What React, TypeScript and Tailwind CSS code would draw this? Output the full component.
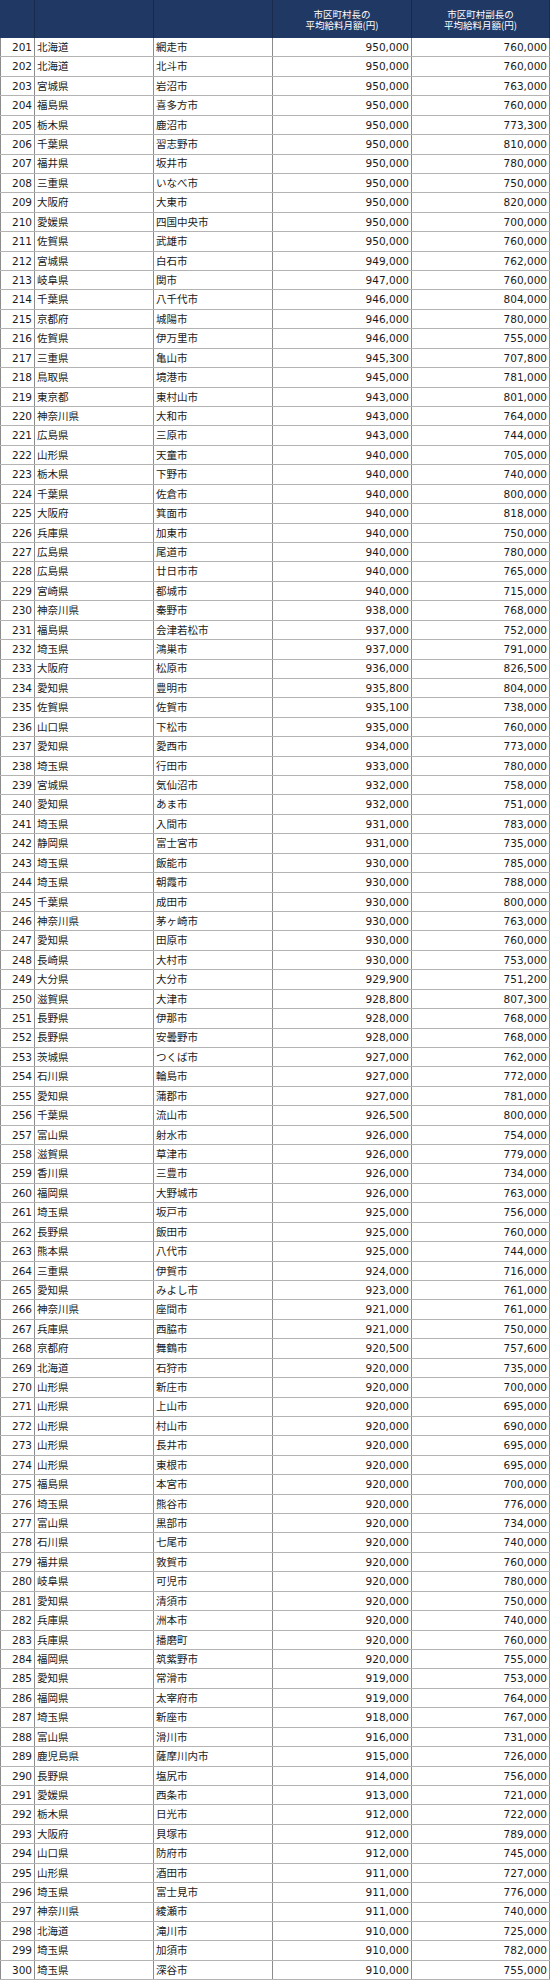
import React from "react";

const raw = `201,北海道,網走市,950000,760000
202,北海道,北斗市,950000,760000
203,宮城県,岩沼市,950000,763000
204,福島県,喜多方市,950000,760000
205,栃木県,鹿沼市,950000,773300
206,千葉県,習志野市,950000,810000
207,福井県,坂井市,950000,780000
208,三重県,いなべ市,950000,750000
209,大阪府,大東市,950000,820000
210,愛媛県,四国中央市,950000,700000
211,佐賀県,武雄市,950000,760000
212,宮城県,白石市,949000,762000
213,岐阜県,関市,947000,760000
214,千葉県,八千代市,946000,804000
215,京都府,城陽市,946000,780000
216,佐賀県,伊万里市,946000,755000
217,三重県,亀山市,945300,707800
218,鳥取県,境港市,945000,781000
219,東京都,東村山市,943000,801000
220,神奈川県,大和市,943000,764000
221,広島県,三原市,943000,744000
222,山形県,天童市,940000,705000
223,栃木県,下野市,940000,740000
224,千葉県,佐倉市,940000,800000
225,大阪府,箕面市,940000,818000
226,兵庫県,加東市,940000,750000
227,広島県,尾道市,940000,780000
228,広島県,廿日市市,940000,765000
229,宮崎県,都城市,940000,715000
230,神奈川県,秦野市,938000,768000
231,福島県,会津若松市,937000,752000
232,埼玉県,鴻巣市,937000,791000
233,大阪府,松原市,936000,826500
234,愛知県,豊明市,935800,804000
235,佐賀県,佐賀市,935100,738000
236,山口県,下松市,935000,760000
237,愛知県,愛西市,934000,773000
238,埼玉県,行田市,933000,780000
239,宮城県,気仙沼市,932000,758000
240,愛知県,あま市,932000,751000
241,埼玉県,入間市,931000,783000
242,静岡県,富士宮市,931000,735000
243,埼玉県,飯能市,930000,785000
244,埼玉県,朝霞市,930000,788000
245,千葉県,成田市,930000,800000
246,神奈川県,茅ヶ崎市,930000,763000
247,愛知県,田原市,930000,760000
248,長崎県,大村市,930000,753000
249,大分県,大分市,929900,751200
250,滋賀県,大津市,928800,807300
251,長野県,伊那市,928000,768000
252,長野県,安曇野市,928000,768000
253,茨城県,つくば市,927000,762000
254,石川県,輪島市,927000,772000
255,愛知県,蒲郡市,927000,781000
256,千葉県,流山市,926500,800000
257,富山県,射水市,926000,754000
258,滋賀県,草津市,926000,779000
259,香川県,三豊市,926000,734000
260,福岡県,大野城市,926000,763000
261,埼玉県,坂戸市,925000,756000
262,長野県,飯田市,925000,760000
263,熊本県,八代市,925000,744000
264,三重県,伊賀市,924000,716000
265,愛知県,みよし市,923000,761000
266,神奈川県,座間市,921000,761000
267,兵庫県,西脇市,921000,750000
268,京都府,舞鶴市,920500,757600
269,北海道,石狩市,920000,735000
270,山形県,新庄市,920000,700000
271,山形県,上山市,920000,695000
272,山形県,村山市,920000,690000
273,山形県,長井市,920000,695000
274,山形県,東根市,920000,695000
275,福島県,本宮市,920000,700000
276,埼玉県,熊谷市,920000,776000
277,富山県,黒部市,920000,734000
278,石川県,七尾市,920000,740000
279,福井県,敦賀市,920000,760000
280,岐阜県,可児市,920000,780000
281,愛知県,清須市,920000,750000
282,兵庫県,洲本市,920000,740000
283,兵庫県,播磨町,920000,760000
284,福岡県,筑紫野市,920000,755000
285,愛知県,常滑市,919000,753000
286,福岡県,太宰府市,919000,764000
287,埼玉県,新座市,918000,767000
288,富山県,滑川市,916000,731000
289,鹿児島県,薩摩川内市,915000,726000
290,長野県,塩尻市,914000,756000
291,愛媛県,西条市,913000,721000
292,栃木県,日光市,912000,722000
293,大阪府,貝塚市,912000,789000
294,山口県,防府市,912000,745000
295,山形県,酒田市,911000,727000
296,埼玉県,富士見市,911000,776000
297,神奈川県,綾瀬市,911000,740000
298,北海道,滝川市,910000,725000
299,埼玉県,加須市,910000,782000
300,埼玉県,深谷市,910000,755000`;

const rows = raw.split("\n").map((line) => {
  const [rank, pref, city, mayor, deputy] = line.split(",");
  return { rank, pref, city, mayor: Number(mayor), deputy: Number(deputy) };
});

const fmt = (n: number) => n.toLocaleString("en-US");

const cols = "grid grid-cols-[35px_119px_119px_139px_138px]";

export default function App() {
  return (
    <div
      className="w-[550px] bg-white text-[#1a1a1a]"
      style={{ fontFamily: '"DejaVu Sans", "Noto Sans CJK JP", sans-serif' }}
    >
      {/* header */}
      <div className={`${cols} h-[38px] bg-[#203864] text-white`}>
        <div className="border-r border-[#1a2a4a]" />
        <div className="border-r border-[#1a2a4a]" />
        <div className="border-r border-[#1a2a4a]" />
        <div
          className="flex flex-col items-center justify-center gap-[1px] border-r border-[#1a2a4a] pt-[1px] text-[9.5px] leading-[10px]"
          style={{ fontFamily: '"Noto Sans CJK JP", sans-serif' }}
        >
          <span>市区町村長の</span>
          <span>平均給料月額(円)</span>
        </div>
        <div
          className="flex flex-col items-center justify-center gap-[1px] border-r border-[#1a2a4a] pt-[1px] text-[9.5px] leading-[10px]"
          style={{ fontFamily: '"Noto Sans CJK JP", sans-serif' }}
        >
          <span>市区町村副長の</span>
          <span>平均給料月額(円)</span>
        </div>
      </div>

      {/* body */}
      {rows.map((r) => (
        <div
          key={r.rank}
          className={`${cols} h-[19.43px] border-b border-[#b3b3b3] text-[10.5px] leading-none`}
        >
          <div className="flex items-center justify-end border-l border-r border-[#8c8c8c] pr-[2px]">
            {r.rank}
          </div>
          <div className="flex items-center border-r border-[#8c8c8c] pl-[2px]">
            {r.pref}
          </div>
          <div className="flex items-center border-r border-[#8c8c8c] pl-[2px]">
            {r.city}
          </div>
          <div className="flex items-center justify-end border-r border-[#8c8c8c] pr-[2px]">
            {fmt(r.mayor)}
          </div>
          <div className="flex items-center justify-end border-r border-[#8c8c8c] pr-[2px]">
            {fmt(r.deputy)}
          </div>
        </div>
      ))}
    </div>
  );
}
